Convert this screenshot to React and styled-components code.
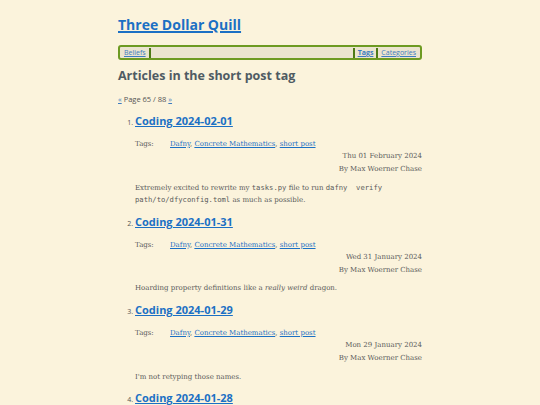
import React from "react";
import styled, { createGlobalStyle } from "styled-components";

const Global = createGlobalStyle`
  html, body { margin: 0; padding: 0; background: #fbf3dc; }
  body { font-family: "DejaVu Serif", serif; color: #5a5a5a; }
  a { color: #1b70c4; }
`;

const Page = styled.div`
  width: 304px;
  margin: 0 auto;
  padding-top: 15px;
`;

const SiteTitle = styled.h1`
  margin: 0;
  font-family: "Open Sans", sans-serif;
  font-weight: 700;
  font-size: 14px;
  line-height: 20px;
  a { color: #1b70c4; text-decoration-thickness: 1.5px; }
`;

const Nav = styled.nav`
  margin-top: 10px;
  height: 11px;
  border: 2px solid #6d9a22;
  border-radius: 3px;
  background: #ebe4cf;
  display: flex;
  align-items: center;
  padding: 0 2px;
  font-family: "Open Sans", sans-serif;
  font-size: 7px;
  line-height: 11px;
`;

const NavLink = styled.a`
  color: #3d7cc0;
  font-weight: ${(p) => (p.$bold ? 700 : 400)};
  padding: 0 2px;
`;

const Bar = styled.span`
  width: 2px;
  height: 10px;
  background: #4d7a16;
  margin: 0 1px;
`;

const Spacer = styled.div`
  flex: 1;
`;

const Heading = styled.h2`
  margin: 8px 0 0;
  font-family: "Open Sans", sans-serif;
  font-weight: 700;
  font-size: 12.5px;
  line-height: 16px;
  color: #4f5b63;
`;

const Pager = styled.div`
  margin-top: 9px;
  font-family: "Open Sans", sans-serif;
  font-size: 7.5px;
  line-height: 12px;
  color: #555;
  a { color: #3d7cc0; }
`;

const List = styled.ol`
  margin: 8px 0 0;
  padding-left: 17px;
`;

const Item = styled.li`
  font-family: "Open Sans", sans-serif;
  font-size: 7px;
  color: #555;
  margin-bottom: 7px;
  &::marker { font-size: 7px; }
`;

const PostTitle = styled.h3`
  display: inline;
  margin: 0;
  font-family: "Open Sans", sans-serif;
  font-weight: 700;
  font-size: 11px;
  line-height: 16px;
  a { color: #1b70c4; text-decoration-thickness: 1.3px; }
`;

const Meta = styled.div`
  margin-top: 9px;
  font-family: "DejaVu Serif", serif;
  font-size: 7px;
  line-height: 12.4px;
  color: #5a5a5a;
`;

const TagRow = styled.div`
  display: grid;
  grid-template-columns: 35px 1fr;
  a { color: #1b70c4; }
`;

const RightLine = styled.div`
  text-align: right;
`;

const Body = styled.p`
  margin: 6.5px 0 0;
  font-family: "DejaVu Serif", serif;
  font-size: 7px;
  line-height: 12.5px;
  color: #5a5a5a;
  code {
    font-family: "DejaVu Sans Mono", monospace;
    font-size: 7.2px;
    white-space: pre-wrap;
  }
`;

const posts = [
  {
    title: "Coding 2024-02-01",
    date: "Thu 01 February 2024",
    body: (
      <>
        Extremely excited to rewrite my <code>tasks.py</code> file to run{" "}
        <code>{"dafny  verify path/to/dfyconfig.toml"}</code> as much as possible.
      </>
    ),
  },
  {
    title: "Coding 2024-01-31",
    date: "Wed 31 January 2024",
    body: (
      <>
        Hoarding property definitions like a <em>really weird</em> dragon.
      </>
    ),
  },
  {
    title: "Coding 2024-01-29",
    date: "Mon 29 January 2024",
    body: <>I'm not retyping those names.</>,
  },
  {
    title: "Coding 2024-01-28",
    date: "Sun 28 January 2024",
    body: <>More work on the proofs.</>,
  },
];

export default function App() {
  return (
    <>
      <Global />
      <Page>
        <SiteTitle>
          <a href="#">Three Dollar Quill</a>
        </SiteTitle>
        <Nav>
          <NavLink href="#">Beliefs</NavLink>
          <Bar />
          <Spacer />
          <Bar />
          <NavLink href="#" $bold>Tags</NavLink>
          <Bar />
          <NavLink href="#">Categories</NavLink>
        </Nav>
        <Heading>Articles in the short post tag</Heading>
        <Pager>
          <a href="#">«</a> Page 65 / 88 <a href="#">»</a>
        </Pager>
        <List start={1}>
          {posts.map((p) => (
            <Item key={p.title}>
              <PostTitle>
                <a href="#">{p.title}</a>
              </PostTitle>
              <Meta>
                <TagRow>
                  <span>Tags:</span>
                  <span>
                    <a href="#">Dafny</a>, <a href="#">Concrete Mathematics</a>,{" "}
                    <a href="#">short post</a>
                  </span>
                </TagRow>
                <RightLine>{p.date}</RightLine>
                <RightLine>By Max Woerner Chase</RightLine>
              </Meta>
              <Body>{p.body}</Body>
            </Item>
          ))}
        </List>
      </Page>
    </>
  );
}
